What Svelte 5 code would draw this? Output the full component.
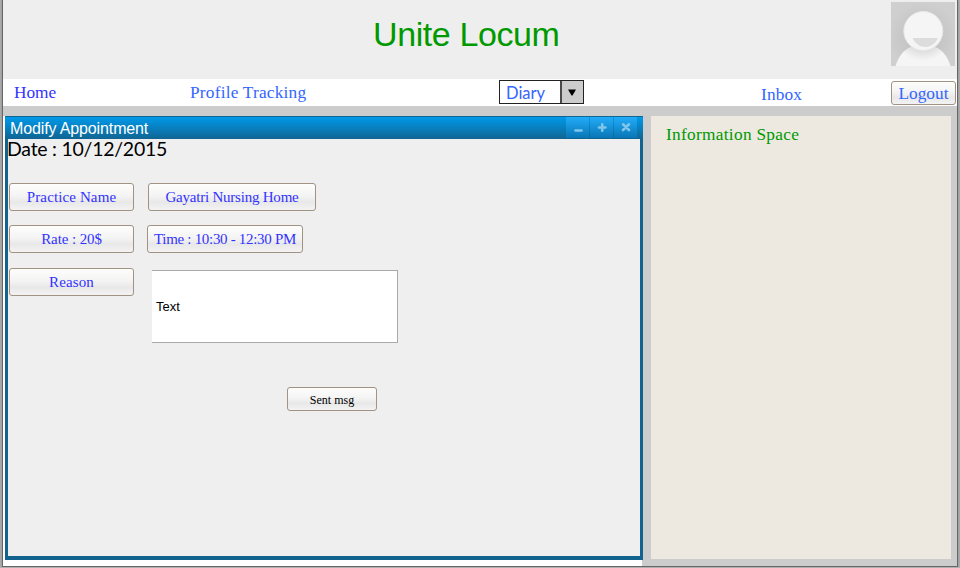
<script>
  let reason = $state('Text');
</script>

<div class="page">
  <header>
    <h1>Unite Locum</h1>
    <svg class="avatar" width="64" height="64" viewBox="0 0 64 64">
      <defs>
        <radialGradient id="shade" cx="50%" cy="55%" r="55%">
          <stop offset="0" stop-color="#bcbcbc" />
          <stop offset="1" stop-color="#cfcfcf" />
        </radialGradient>
        <radialGradient id="neck" gradientUnits="userSpaceOnUse" cx="32" cy="31" r="28">
          <stop offset="0.6" stop-color="#dcdcdc" />
          <stop offset="1" stop-color="#f5f5f5" />
        </radialGradient>
      </defs>
      <rect width="64" height="64" fill="url(#shade)" />
      <path d="M4.500 64C8 53 14 46 22 44.500H42C50 46 56 53 59.500 64Z" fill="url(#neck)" />
      <circle cx="32.300" cy="29" r="19.500" fill="#f5f5f5" stroke="#e8e8e8" stroke-width="1" />
      <path d="M21.500 36H47C44 42 39.500 45 34.300 45S24.500 42 21.500 36Z" fill="#dcdcdc" />
    </svg>
  </header>

  <nav>
    <a class="home" href="#home">Home</a>
    <a class="tracking" href="#profile">Profile Tracking</a>
    <div class="select">
      <span>Diary</span>
      <div class="drop">
        <svg width="8" height="7" viewBox="0 0 8 7"><path d="M0 .500H8L4.500 6.500H3.500Z" fill="#000" /></svg>
      </div>
    </div>
    <a class="inbox" href="#inbox">Inbox</a>
    <button class="logout">Logout</button>
  </nav>

  <div class="strip"></div>

  <main>
    <div class="left">
      <section class="window">
        <div class="titlebar">
          <h2>Modify Appointment</h2>
          <div class="controls">
            <i><svg width="23" height="21" viewBox="0 0 23 21"><path d="M9.500 13.500H15.500" /></svg></i>
            <i><svg width="23" height="21" viewBox="0 0 23 21"><path d="M9 10.500H15.500M12.250 7.250V13.750" /></svg></i>
            <i><svg width="23" height="21" viewBox="0 0 23 21"><path d="M9 7.300L15 13M15 7.300L9 13" /></svg></i>
          </div>
        </div>
        <div class="body">
          <p class="date">Date : 10/12/2015</p>
          <div class="row">
            <button class="label">Practice Name</button>
            <button class="place">Gayatri Nursing Home</button>
          </div>
          <div class="row second">
            <button class="label rate">Rate : 20$</button>
            <button class="time">Time : 10:30 - 12:30 PM</button>
          </div>
          <div class="row third">
            <button class="label">Reason</button>
            <div class="field">{reason}</div>
          </div>
          <button class="send">Sent msg</button>
        </div>
      </section>
    </div>
    <div class="right">
      <aside>Information Space</aside>
    </div>
  </main>
</div>

<style>
  :global(body) { background: #b0b0b0; overflow: hidden; }
  * { box-sizing: border-box; }
  h1, h2, p { margin: 0; font-weight: normal; }

  .page {
    width: 956px;
    height: 567px;
    margin-left: 2px;
    border: 1px solid #666;
    border-top: 0;
    display: flex;
    flex-direction: column;
    background: #fff;
    font-family: "Liberation Serif", "Times New Roman", serif;
    white-space: nowrap;
    box-shadow: 0 0 3px #888;
  }
  header {
    height: 79px;
    background: #eee;
    display: flex;
    justify-content: space-between;
    padding: 2px 2px 0 370px;
  }
  h1 {
    font: 34px/40px "Liberation Sans", Arial, sans-serif;
    letter-spacing: -0.4px;
    color: #090;
    margin-top: 12px;
  }
  nav {
    height: 27px;
    display: flex;
    align-items: flex-start;
    font-size: 17.3px;
    line-height: 20px;
  }
  a { color: #36f; text-decoration: none; }
  .home { width: 176px; padding: 4px 0 0 11px; color: #33f; }
  .tracking { width: 320px; padding: 4px 0 0 11px; letter-spacing: 0.22px; }
  .select {
    width: 85px;
    height: 24px;
    margin-top: 1px;
    border: 1px solid #222;
    display: flex;
    font: 16.5px/24px Lato, Carlito, Calibri, sans-serif;
    color: #36f;
  }
  .select span { width: 60px; padding-left: 6px; }
  .drop {
    flex: 1;
    border-left: 2px solid #4a4a4a;
    background: #ccc;
    display: flex;
    align-items: center;
    justify-content: center;
    padding-right: 2px;
  }
  .inbox { width: 307px; padding: 6px 0 0 177px; letter-spacing: 0.15px; }
  button {
    padding: 0;
    border: 1px solid #a09384;
    border-radius: 3px;
    background: linear-gradient(#fdfdfc 0%, #f4f4f4 45%, #e8e8e8 70%, #f3f3f3 100%);
    font-family: inherit;
    font-size: 15px;
    color: #33f;
    white-space: nowrap;
  }
  .logout { width: 65px; height: 24px; margin-top: 2px; padding-top: 1px; font-size: 17.3px; color: #36f; }
  .strip { height: 10px; background: #ccc; }
  main { flex: 1; display: flex; }
  .left { width: 639px; padding-left: 2px; flex: none; }
  .window { position: relative; width: 638px; height: 444px; display: flex; flex-direction: column; }
  .titlebar {
    height: 23px;
    border-top: 1px solid #106593;
    background: linear-gradient(#0099ea, #106593);
    display: flex;
    justify-content: space-between;
    padding: 0 6px 0 5px;
  }
  h2 {
    font: 16px/23px "Liberation Sans", Arial, sans-serif;
    letter-spacing: -0.13px;
    color: #fff;
  }
  .controls { display: flex; gap: 1px; }
  .controls i {
    width: 23px;
    height: 21px;
    background: linear-gradient(#22acf9, #0876b5);
  }
  .controls svg {
    display: block;
    fill: none;
    stroke: #80c5ec;
    stroke-width: 2.6;
    stroke-linecap: round;
  }
  .body {
    flex: 1;
    border: 3px solid #12648e;
    border-top: 0;
    border-bottom-width: 4px;
    background: #efefef;
  }
  .date {
    height: 44px;
    font: 19.5px/20px Lato, Carlito, Calibri, sans-serif;
    color: #000;
    letter-spacing: -0.25px;
    text-indent: -1px;
  }
  .row { display: flex; height: 28px; padding-left: 1px; }
  .second { margin-top: 14px; }
  .third { margin-top: 15px; height: 76px; }
  .label { width: 125px; height: 28px; letter-spacing: 0.12px; }
  .rate { letter-spacing: -0.1px; }
  .place { width: 168px; margin-left: 14px; letter-spacing: -0.22px; }
  .time { width: 156px; margin-left: 13px; letter-spacing: -0.31px; }
  .field {
    width: 246px;
    height: 73px;
    margin: 2px 0 0 18px;
    border: 1px solid #a9a9a9;
    border-left: 0;
    background: #fff;
    padding-left: 4px;
    font: 13px/71px "Liberation Sans", Arial, sans-serif;
    color: #000;
  }
  .send {
    display: block;
    width: 90px;
    height: 24px;
    margin: 43px 0 0 279px;
    padding-top: 2px;
    font-size: 12px;
    color: #000;
  }
  .right { flex: 1; padding: 0 6px 0 9px; background: #ccc; }
  aside {
    height: 443px;
    padding: 9px 0 0 15px;
    background: #ede9e1;
    color: #090;
    font-size: 17.3px;
    line-height: 20px;
    letter-spacing: 0.3px;
  }
</style>
